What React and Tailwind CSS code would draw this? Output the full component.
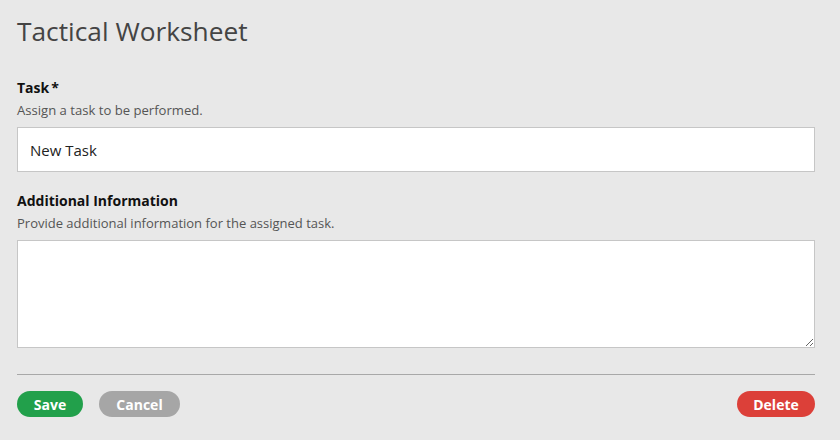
export default function App() {
  return (
    <div className="w-[840px] h-[440px] bg-[#e8e8e8] pl-[17px] pr-[25px] pt-[15px] text-[#222]" style={{ fontFamily: '"Open Sans", "Lato", sans-serif' }}>
      <h1 className="text-[26.3px] leading-[32px] text-[#444] font-normal">Tactical Worksheet</h1>

      <div className="mt-[31px]">
        <label className="block text-[14px] leading-[20px] font-bold text-[#111]">Task<span className="ml-[2px]">*</span></label>
        <p className="mt-[3px] text-[13.1px] leading-[18px] text-[#555]">Assign a task to be performed.</p>
        <input
          type="text"
          defaultValue="New Task"
          className="mt-[8px] block w-full h-[45px] bg-white border border-[#c6c6c6] px-[12px] text-[15px] text-[#222] outline-none"
        />
      </div>

      <div className="mt-[19px]">
        <label className="block text-[14px] leading-[20px] font-bold text-[#111]">Additional Information</label>
        <p className="mt-[3px] text-[13px] leading-[18px] text-[#555]">Provide additional information for the assigned task.</p>
        <textarea
          className="mt-[8px] block w-full h-[108px] bg-white border border-[#c6c6c6] px-[12px] py-[10px] text-[15px] outline-none"
        />
      </div>

      <div className="mt-[26px] h-px bg-[#a8a8a8]" />

      <div className="mt-[16px] flex items-center">
        <button className="h-[26px] w-[66px] rounded-full bg-[#22a04b] text-white text-[14px] font-bold">Save</button>
        <button className="ml-[16px] h-[26px] w-[81px] rounded-full bg-[#a6a6a6] text-white text-[14px] font-bold">Cancel</button>
        <button className="ml-auto h-[26px] w-[78px] rounded-full bg-[#dc4039] text-white text-[14px] font-bold">Delete</button>
      </div>
    </div>
  );
}
